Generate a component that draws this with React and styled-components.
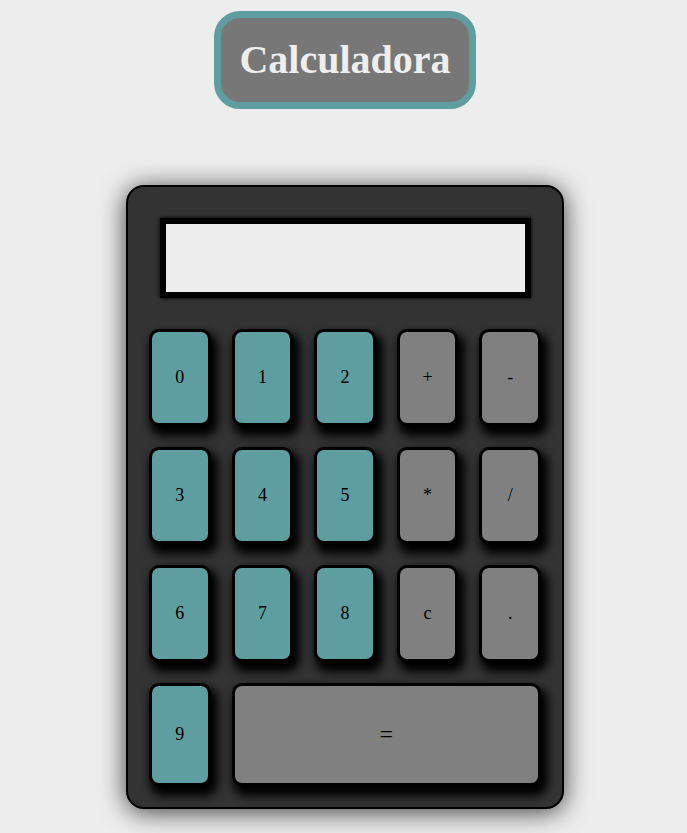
import React from "react";
import styled, { createGlobalStyle } from "styled-components";

const Global = createGlobalStyle`
  html, body { margin: 0; padding: 0; background: #ededed; }
  body { font-family: "Liberation Serif", "Times New Roman", serif; min-height: 100vh; }
`;

const Page = styled.div`
  display: flex;
  flex-direction: column;
  align-items: center;
  padding: 11px 0 24px 3px;
`;

const Title = styled.h1`
  margin: 0;
  box-sizing: border-box;
  width: 262px;
  height: 98px;
  display: flex;
  align-items: center;
  justify-content: center;
  background: #777777;
  color: #eeeeee;
  border: 7px solid #5f9ea0;
  border-radius: 26px;
  font-family: "Liberation Serif", "Times New Roman", serif;
  font-weight: bold;
  font-size: 40px;
  padding-bottom: 2px;
`;

const Calculator = styled.div`
  margin-top: 76px;
  box-sizing: border-box;
  width: 438px;
  background: #333333;
  border: 2px solid #000;
  border-radius: 18px;
  padding: 31px 21px 21px;
  box-shadow: 0 3px 26px rgba(0, 0, 0, 0.75);
`;

const Display = styled.div`
  box-sizing: border-box;
  width: 371px;
  height: 80px;
  margin: 0 auto 31px;
  background: #ededed;
  border: 6px solid #000;
  box-shadow: 0 0 4px #000;
`;

const Keys = styled.div`
  display: grid;
  grid-template-columns: repeat(5, 1fr);
  grid-template-rows: 97px 97px 97px 103px;
  gap: 21px;
`;

const Key = styled.button`
  box-sizing: border-box;
  margin: 0;
  padding: 0;
  grid-column: span ${(p) => p.$span || 1};
  background: ${(p) => (p.$op ? "#808080" : "#5f9ea0")};
  border: 3px solid #000;
  border-radius: 10px;
  box-shadow: 4px 7px 10px 3px #000;
  color: #000;
  font-family: "Liberation Serif", "Times New Roman", serif;
  font-size: ${(p) => (p.$big ? "24px" : "18px")};
  cursor: pointer;
  display: flex;
  align-items: center;
  justify-content: center;
`;

const keys = [
  ["0"], ["1"], ["2"], ["+", true], ["-", true],
  ["3"], ["4"], ["5"], ["*", true], ["/", true],
  ["6"], ["7"], ["8"], ["c", true], [".", true],
  ["9"],
];

export default function App() {
  return (
    <>
      <Global />
      <Page>
        <Title>Calculadora</Title>
        <Calculator>
          <Display />
          <Keys>
            {keys.map(([k, op]) => (
              <Key key={k} $op={op}>{k}</Key>
            ))}
            <Key $op $span={4} $big>=</Key>
          </Keys>
        </Calculator>
      </Page>
    </>
  );
}
